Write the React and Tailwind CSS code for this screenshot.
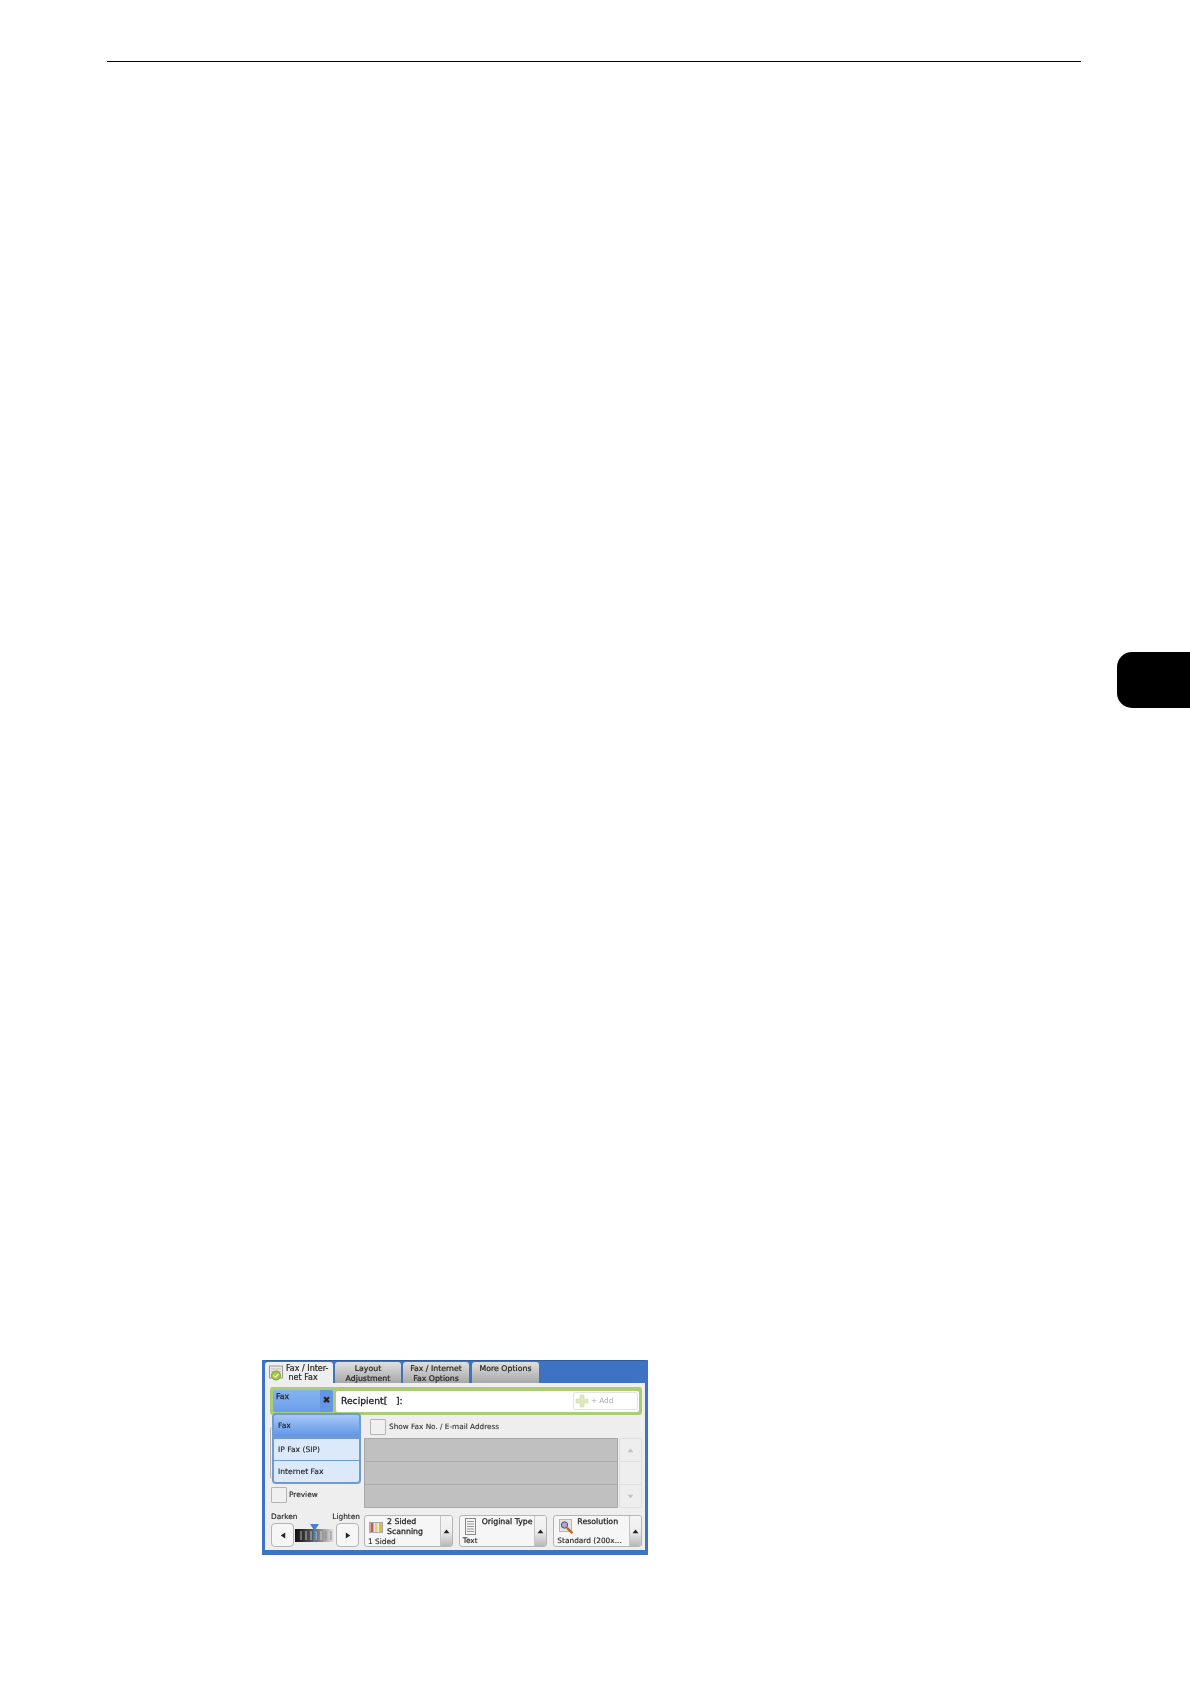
import React from "react";

const font = { fontFamily: '"DejaVu Sans", sans-serif' };

const Arrow = ({ dir = "up", className = "" }) => (
  <svg width="7" height="5" viewBox="0 0 8 6" className={className}>
    {dir === "up" && <path d="M4 0.5 L7.5 5 L0.5 5 Z" fill="currentColor" />}
    {dir === "down" && <path d="M4 5.5 L7.5 1 L0.5 1 Z" fill="currentColor" />}
  </svg>
);

const Side = ({ dir }) => (
  <svg width="6" height="7" viewBox="0 0 6 8">
    {dir === "left" ? (
      <path d="M0.5 4 L5.5 0.5 L5.5 7.5 Z" fill="#222" />
    ) : (
      <path d="M5.5 4 L0.5 0.5 L0.5 7.5 Z" fill="#222" />
    )}
  </svg>
);

const FaxIcon = () => (
  <svg width="15" height="16" viewBox="0 0 15 16" className="shrink-0">
    <rect x="0.5" y="1" width="13" height="12" fill="#e8e8e8" stroke="#999" />
    <path d="M2 4h10M2 6.5h10" stroke="#bbb" />
    <circle cx="7" cy="10.5" r="4.5" fill="#a4c83e" stroke="#7d9f2c" />
    <path d="M4.5 10.5l2 1.5 3-3" stroke="#f2f7d8" strokeWidth="1.2" fill="none" />
  </svg>
);

const PlusIcon = () => (
  <svg width="14" height="14" viewBox="0 0 14 14" className="shrink-0">
    <path d="M5 1h4v4h4v4H9v4H5V9H1V5h4z" fill="#dde8bd" stroke="#d0deac" strokeWidth="0.6" />
  </svg>
);

const SidedIcon = () => (
  <svg width="14" height="11" viewBox="0 0 14 11" className="shrink-0 mt-[5px]">
    <rect x="0.5" y="0.5" width="13" height="10" fill="#eee" stroke="#aaa" />
    <rect x="1.5" y="1" width="3" height="9" fill="#c8585a" />
    <rect x="6" y="1" width="2.5" height="9" fill="#e8d070" />
    <rect x="10" y="1" width="3" height="9" fill="#eab838" />
  </svg>
);

const DocIcon = () => (
  <svg width="11" height="17" viewBox="0 0 11 17" className="shrink-0 mt-px">
    <rect x="0.5" y="0.5" width="10" height="16" fill="#f2f2f2" stroke="#888" />
    <path d="M2 3.5h7M2 6h7M2 8.5h7M2 11h7M2 13.5h7" stroke="#999" />
  </svg>
);

const LensIcon = () => (
  <svg width="15" height="15" viewBox="0 0 15 15" className="shrink-0 mt-[2px]">
    <rect x="0.5" y="0.5" width="12" height="12" fill="#e4e4e4" stroke="#b5b5b5" />
    <circle cx="5.5" cy="6" r="3.2" fill="#a6a6d8" stroke="#555" />
    <path d="M8 8.8l5.5 5.5" stroke="#c0682a" strokeWidth="2.4" />
  </svg>
);

const Check = ({ className = "" }) => (
  <div className={`w-[16px] h-[16px] shrink-0 bg-[#f0f0f0] border border-[#b5b5b5] rounded-[1px] ${className}`} />
);

const Tab = ({ children, className = "" }) => (
  <div
    className={`h-[21px] flex justify-center text-center rounded-t-[3px] text-[7.8px] leading-[9.5px] text-[#222] [-webkit-text-stroke:0.2px] bg-gradient-to-b from-[#e0e0e0] to-[#a8a8a8] ${className}`}
  >
    <span>{children}</span>
  </div>
);

const MenuItem = ({ children, active, className = "" }) => (
  <div
    className={`flex items-center pl-[4px] text-[7.6px] text-[#222] [-webkit-text-stroke:0.12px] ${
      active
        ? "h-[23px] bg-gradient-to-b from-[#a8c8f6] to-[#5f97e8] border-b-2 border-[#6f9bd4]"
        : "h-[21px] bg-[#dbe9fb]"
    } ${className}`}
  >
    {children}
  </div>
);

const Feature = ({ icon, title, value, rowClass = "" }) => (
  <div className="flex-1 h-[32px] flex border border-[#b4b4b4] rounded-[3px] bg-[#f6f6f6] overflow-hidden">
    <div className="flex-1 min-w-0 flex flex-col">
      <div className={`flex flex-1 pt-px ${rowClass}`}>
        {icon}
        <div className="text-[7.8px] leading-[10px] text-[#222] whitespace-nowrap [-webkit-text-stroke:0.25px]">{title}</div>
      </div>
      <div className="text-[7.4px] leading-[10px] text-[#222] pl-[3px] whitespace-nowrap [-webkit-text-stroke:0.12px]">{value}</div>
    </div>
    <div className="w-[12px] flex items-center justify-center border-l border-[#c4c4c4] bg-gradient-to-b from-[#f4f4f4] via-[#eeeeee] to-[#b8b8b8] text-[#222]">
      <Arrow />
    </div>
  </div>
);

const FaxPanel = () => (
  <div className="w-[386px] h-[195px] ml-[262px] flex flex-col bg-[#3e73c4] px-[3px] blur-[0.45px]" style={font}>
    {/* onglets */}
    <div className="h-[23px] flex items-end gap-[2px] border-t border-[#2f5a9e]">
      <div className="h-[21px] w-[68px] flex items-center gap-[2px] pl-[4px] pt-px bg-[#eeeeee] rounded-t-[3px] text-[8px] leading-[9.5px] text-[#222] [-webkit-text-stroke:0.2px]">
        <FaxIcon />
        <span>Fax / Inter-<br />&nbsp;net Fax</span>
      </div>
      <Tab className="w-[66px] pt-[2px]">Layout<br />Adjustment</Tab>
      <Tab className="w-[66px] pt-[2px]">Fax / Internet<br />Fax Options</Tab>
      <Tab className="w-[67px] ml-px pt-[2px]">More Options</Tab>
    </div>

    <div className="flex-1 flex flex-col bg-[#eeeeee] pl-[5px] pr-[3px] pt-[4px] mb-[5px]">
      {/* destinataire */}
      <div className="h-[28px] shrink-0 flex gap-[3px] items-center bg-[#a9cc74] rounded-[3px] p-[3px]">
        <div className="h-[22px] w-[60px] flex rounded-[2px] overflow-hidden bg-gradient-to-b from-[#85b3f0] to-[#6a9fea] text-[7.8px] text-[#222] [-webkit-text-stroke:0.25px]">
          <span className="flex-1 pl-[3px] pt-[1px]">Fax</span>
          <div className="w-[13px] flex items-center justify-center bg-[#6496e2] text-[9px]">✖</div>
        </div>
        <div className="flex-1 h-[21px] flex items-center justify-between bg-white rounded-[2px] pl-[5px] pr-[1px]">
          <span className="text-[9.2px] text-[#222] [-webkit-text-stroke:0.3px]">Recipient[&nbsp;&nbsp;&nbsp;]:</span>
          <div className="w-[65px] h-[18px] flex items-center gap-[2px] pl-[1px] border border-[#e4e4e4] rounded-[2px] text-[7.2px] text-[#aaa]">
            <PlusIcon />+ Add
          </div>
        </div>
      </div>

      <div className="flex-1 flex gap-[2px] min-h-0">
        {/* colonne gauche */}
        <div className="w-[92px] shrink-0 flex flex-col">
          <div className="relative ml-[2px] w-[89px] -mt-[2px]">
            <div className="absolute -left-[2px] top-[14px] w-[4px] h-[52px] border-l border-[#b0b0b0] rounded-l-[3px]" />
            <div className="relative border-[2px] border-[#6f9bd4] rounded-[4px] overflow-hidden flex flex-col gap-[1px] bg-[#6f9bd4]">
              <MenuItem active>Fax</MenuItem>
              <MenuItem>IP Fax (SIP)</MenuItem>
              <MenuItem>Internet Fax</MenuItem>
            </div>
          </div>
          <div className="flex items-center gap-[2px] mt-[3px] ml-[1px] text-[7.4px] text-[#222] [-webkit-text-stroke:0.12px]">
            <Check />
            Preview
          </div>
          <div className="flex justify-between text-[7.4px] leading-[10px] text-[#222] mt-[9px] pl-px pr-[2px] [-webkit-text-stroke:0.12px]">
            <span>Darken</span>
            <span>Lighten</span>
          </div>
          <div className="flex items-center mt-[1px] ml-[1px]">
            <div className="w-[23px] h-[24px] shrink-0 flex items-center justify-center bg-[#f6f6f6] border border-[#b4b4b4] rounded-[4px]">
              <Side dir="left" />
            </div>
            <div className="relative w-[40px] h-[13px] mx-[1px] shrink-0 flex bg-gradient-to-r from-[#111] via-[#666] to-[#f0f0f0]">
              <svg width="40" height="13" viewBox="0 0 40 13">
                <path d="M6 2v9M11 2v9M16 2v9M21 2v9M26 2v9" stroke="#e8e8e8" strokeWidth="1" opacity="0.75" />
                <path d="M31 2v9M36 2v9" stroke="#777" strokeWidth="1" opacity="0.75" />
              </svg>
              <svg width="10" height="18" viewBox="0 0 10 18" className="absolute -top-[5px] left-[15px]">
                <path d="M0 0h9L4.5 7z M3.5 6h2v12h-2z" fill="#4a80d0" />
              </svg>
            </div>
            <div className="w-[23px] h-[24px] shrink-0 flex items-center justify-center bg-[#f6f6f6] border border-[#b4b4b4] rounded-[4px]">
              <Side dir="right" />
            </div>
          </div>
        </div>

        {/* colonne droite */}
        <div className="flex-1 flex flex-col min-w-0">
          <div className="h-[20px] mt-[2px] flex items-center gap-[3px] pl-[6px] text-[7.3px] text-[#333] [-webkit-text-stroke:0.12px]">
            <Check />
            Show Fax No. / E-mail Address
          </div>
          <div className="h-[70px] mt-[1px] flex gap-[1px]">
            <div className="flex-1 flex flex-col gap-px bg-[#a9a9a9] border border-[#a8a8a8]">
              <div className="flex-1 bg-[#c0c0c0]" />
              <div className="flex-1 bg-[#c0c0c0]" />
              <div className="flex-1 bg-[#c0c0c0]" />
            </div>
            <div className="w-[23px] flex flex-col border border-[#dedede] rounded-[2px] text-[#c4c4c4]">
              <div className="flex-1 flex items-center justify-center border-b border-[#e0e0e0]"><Arrow /></div>
              <div className="flex-1 border-b border-[#e0e0e0]" />
              <div className="flex-1 flex items-center justify-center"><Arrow dir="down" /></div>
            </div>
          </div>
          <div className="flex gap-[6px] mt-[7px]">
            <Feature icon={<SidedIcon />} title={<>2 Sided<br />Scanning</>} value="1 Sided" rowClass="gap-[4px] pl-[4px]" />
            <Feature icon={<DocIcon />} title="Original Type" value="Text" rowClass="gap-[6px] pl-[5px]" />
            <Feature icon={<LensIcon />} title="Resolution" value="Standard (200x..." rowClass="gap-[3px] pl-[5px]" />
          </div>
        </div>
      </div>
    </div>
  </div>
);

export default function App() {
  return (
    <div className="w-[1190px] h-[1684px] bg-white flex flex-col overflow-hidden">
      {/* filet d'en-tête */}
      <div className="w-[974px] h-px ml-[107px] mt-[61px] bg-black shrink-0" />
      {/* onglet de chapitre */}
      <div className="w-[73px] h-[56px] mt-[590px] self-end bg-black rounded-l-[15px] shrink-0" />
      <div className="mt-[652px] shrink-0">
        <FaxPanel />
      </div>
    </div>
  );
}
